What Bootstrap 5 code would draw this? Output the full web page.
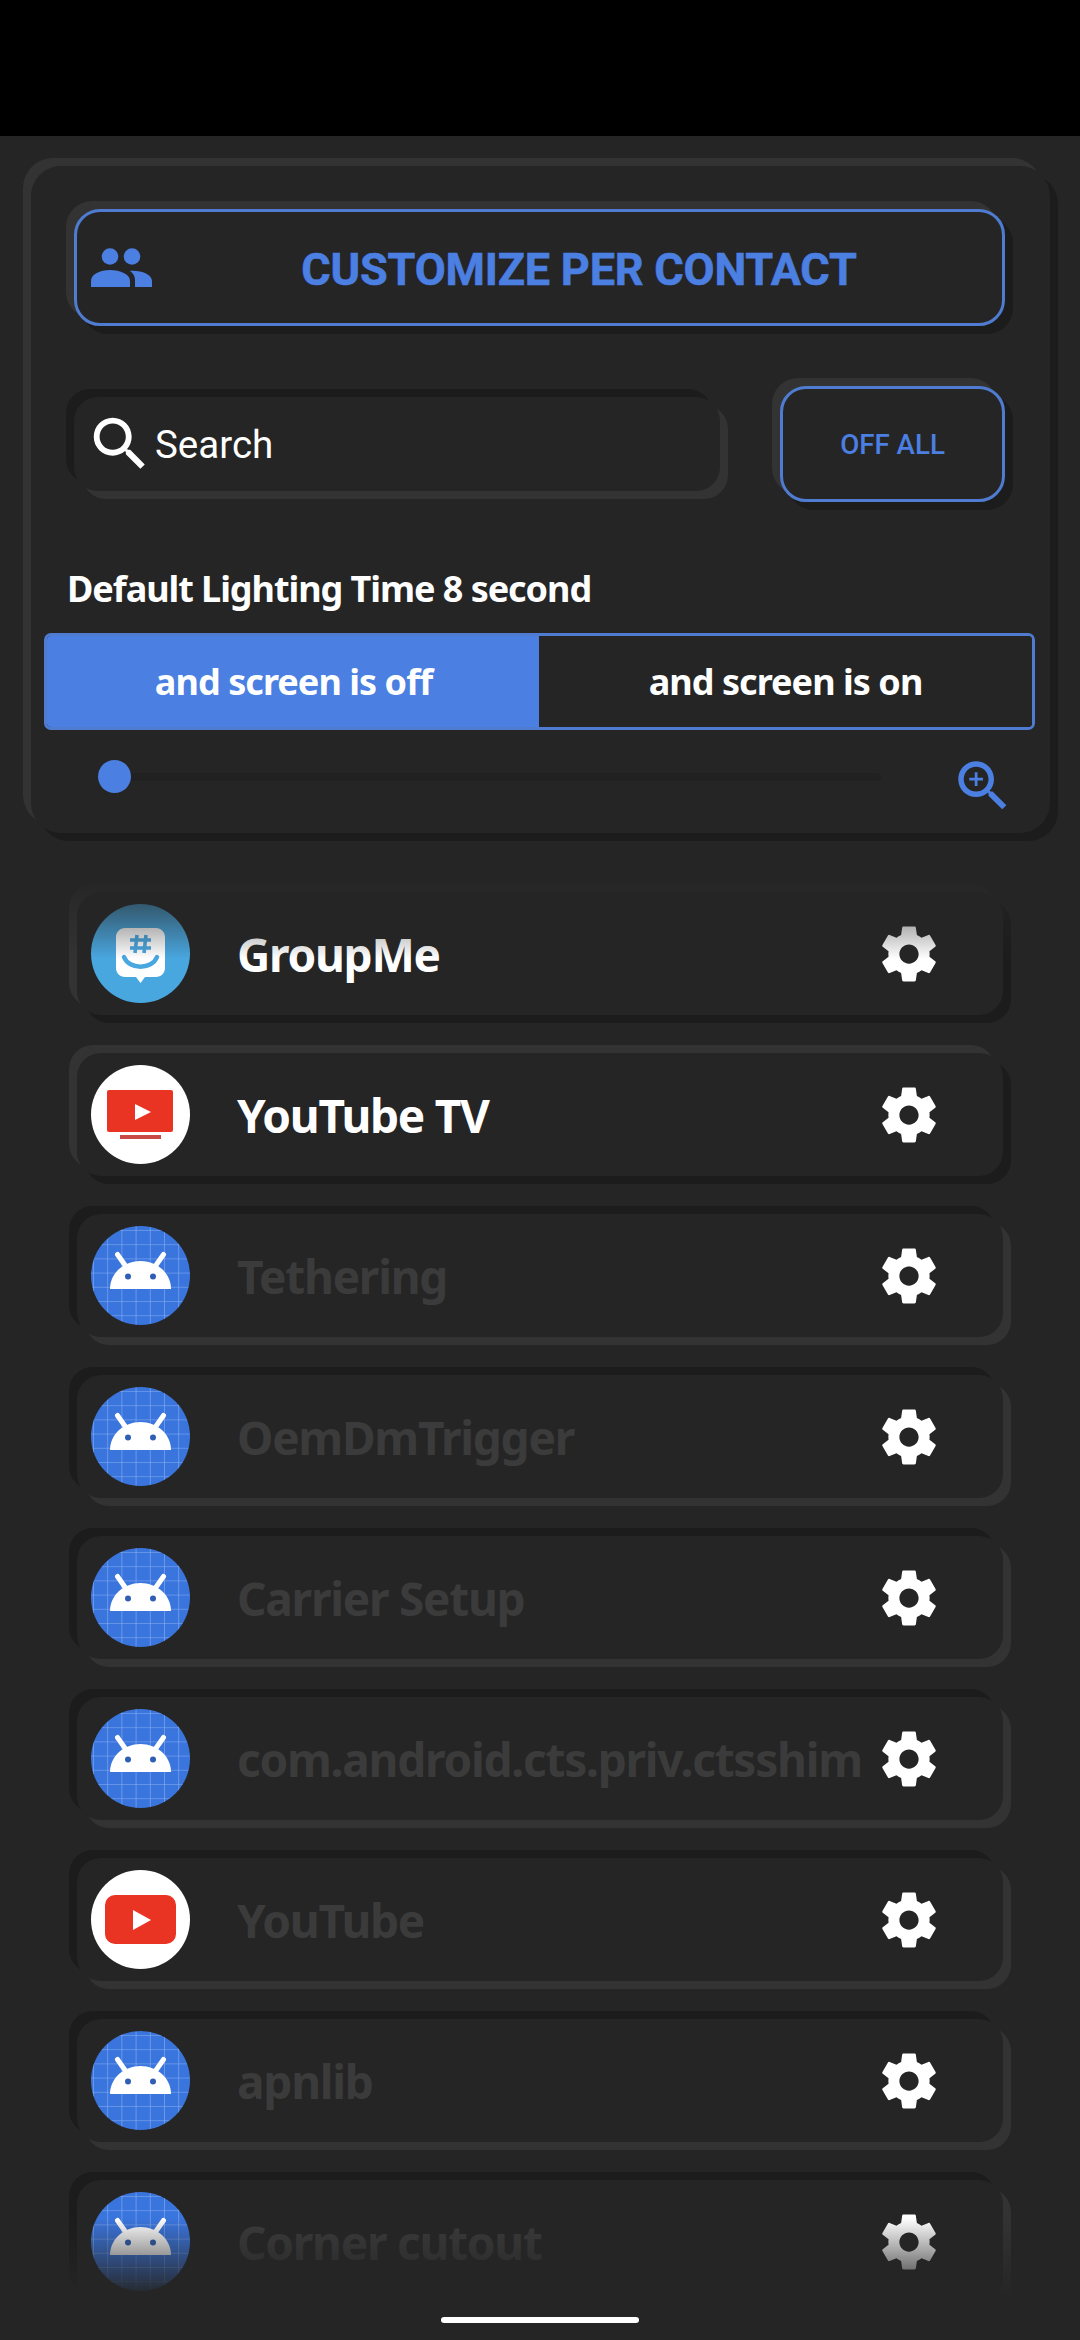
<!DOCTYPE html>
<html lang="en"><head><meta charset="utf-8"><title>Lighting</title>
<link href="https://cdn.jsdelivr.net/npm/bootstrap@5.3.0/dist/css/bootstrap.min.css" rel="stylesheet">
<style>
:root{--pg:#252525;--hi:#333333;--lo:#1c1c1c;--blue:#4b7fe2;--edge:#4f7cd0}
html,body{height:2340px;overflow:hidden;background:var(--pg)}
body{font-family:"Noto Sans",sans-serif;color:#fff}
.statusband{height:136px;background:#000}
.raised{box-shadow:-8px -8px 0 var(--hi),8px 8px 0 var(--lo)}
.pressed{box-shadow:-8px -8px 0 var(--lo),8px 8px 0 var(--hi)}
.panel-box{margin:30px 30px 0 31px;height:667px;border-radius:30px;background:var(--pg)}
.btn.cust-btn{margin:43px 45px 0 43px;height:117px;width:931px;border:3px solid var(--edge);border-radius:26px;background:var(--pg);color:var(--blue);font:700 45px Roboto,sans-serif;padding:3px 0 0 79px;position:relative;text-transform:uppercase;letter-spacing:-.2px;-webkit-text-stroke:.6px var(--blue)}
.people{position:absolute;left:14px;top:36px}
.search-line{margin:60px 45px 0 43px;height:116px}
.search-wrap{width:646px;height:94px;border-radius:24px;background:var(--pg);padding-left:11px}
.search-field.form-control{background:transparent;border:0;box-shadow:none;color:#fff;font:400 38.5px Roboto,sans-serif;padding:0;height:94px}
.search-field::placeholder{color:#fff;opacity:1}
.btn.off-btn{width:225px;height:116px;border:3px solid var(--edge);border-radius:26px;background:var(--pg);color:var(--blue);font:500 27.7px Roboto,sans-serif;padding:0}
.time-label{margin:64px 0 0 36px;height:46px;font-size:36px;font-weight:700;line-height:46px;letter-spacing:-1.05px}
.mode-group{margin:21px 15px 0 13px;height:97px;width:991px;border:3px solid var(--edge);border-radius:7px;overflow:hidden}
.btn.mode-btn{flex:1 1 50%;border:0;border-radius:0;font-size:36px;font-weight:700;color:#fff;padding:0;letter-spacing:-.95px;background:var(--pg)}
.btn.mode-btn.on{background:var(--blue)}
.slider-line{margin:30px 46px 0 67px;height:49px;position:relative}
.track-range.form-range{width:783px;height:33px;margin-top:0;padding:0;display:block}
.track-range::-webkit-slider-runnable-track{height:8px;background:#212121;border-radius:4px}
.track-range::-webkit-slider-thumb{width:33px;height:33px;margin-top:-12.5px;background:var(--blue);border-radius:50%;border:0}
.zoom-ico{position:absolute;top:-7px;right:-12px}
.app-list{height:1424px;margin-top:46px;padding:13px 77px 0 77px;overflow:hidden;position:relative;width:1080px}
.app-row{height:123px;margin-bottom:38px;border-radius:24px;background:var(--pg);padding:0 61px 0 14px}
.app-ico{width:99px;height:99px;flex:none;display:block}
.app-name{margin-left:47px;font-size:46px;font-weight:700;letter-spacing:-1.25px;white-space:nowrap;line-height:1;flex:1 1 auto}
.dim{color:#3b3b3b}
.gear{width:66px;height:66px;flex:none;display:block;fill:#fff}
.fade-top,.fade-btm{position:absolute;left:0;right:0;pointer-events:none}
.fade-top{top:0;height:80px;background:linear-gradient(to bottom,#252525 0,rgba(37,37,37,.62) 30%,rgba(37,37,37,0) 100%)}
.fade-btm{bottom:0;height:85px;background:linear-gradient(to bottom,rgba(37,37,37,0) 0,rgba(37,37,37,.97) 90%,#252525 100%)}
.home-pill{position:absolute;left:441px;top:2317px;width:198px;height:6px;border-radius:3px;background:#fff}
</style></head>
<body>
<svg width="0" height="0" class="position-absolute">
<defs>
<pattern id="gridp" x="2" y="4" width="14.2" height="14.2" patternUnits="userSpaceOnUse"><path d="M0 0H14.2M0 0V14.2" stroke="#a9c6f7" stroke-width="1.1" fill="none" opacity=".75"/></pattern>
<symbol id="droid" viewBox="0 0 99 99">
<circle cx="49.5" cy="49.5" r="49.5" fill="#3a75de"/><circle cx="49.5" cy="49.5" r="49.5" fill="url(#gridp)"/>
<path d="M26.500 28.500L36 42M72.500 28.500L63 42" stroke="#fff" stroke-width="5" stroke-linecap="round"/>
<path d="M19 63C19 47 33 35 49.5 35S80 47 80 63Z" fill="#fff"/>
<circle cx="37" cy="50.500" r="3" fill="#2f5fb5"/><circle cx="62" cy="50.500" r="3" fill="#2f5fb5"/>
</symbol>
<symbol id="cog" viewBox="0 0 24 24"><path d="M19.43 12.98c.04-.32.07-.64.07-.98s-.03-.66-.07-.98l2.11-1.65c.19-.15.24-.42.12-.64l-2-3.46c-.12-.22-.39-.3-.61-.22l-2.49 1c-.52-.4-1.08-.73-1.69-.98l-.38-2.65C14.46 2.18 14.25 2 14 2h-4c-.25 0-.46.18-.49.42l-.38 2.65c-.61.25-1.17.59-1.69.98l-2.49-1c-.23-.09-.49 0-.61.22l-2 3.46c-.13.22-.07.49.12.64l2.11 1.65c-.04.32-.07.65-.07.98s.03.66.07.98l-2.11 1.65c-.19.15-.24.42-.12.64l2 3.46c.12.22.39.3.61.22l2.49-1c.52.4 1.08.73 1.69.98l.38 2.65c.03.24.24.42.49.42h4c.25 0 .46-.18.49-.42l.38-2.65c.61-.25 1.17-.59 1.69-.98l2.49 1c.23.09.49 0 .61-.22l2-3.46c.12-.22.07-.49-.12-.64l-2.11-1.65zM12 15.500c-1.93 0-3.5-1.57-3.5-3.5s1.57-3.5 3.5-3.5 3.5 1.57 3.5 3.5-1.57 3.5-3.5 3.5z"/></symbol>
</defs></svg>
<div class="statusband"></div>
<section class="panel-box raised d-flex flex-column">
  <button class="btn cust-btn raised" type="button">
    <svg class="people" width="61" height="39" viewBox="0 0 61 39" fill="#4b7fe2"><circle cx="19" cy="8.500" r="8.300"/><circle cx="41" cy="8.500" r="8.300"/><path d="M0 39V33C0 26 9 22 19 22S39 26 39 33V39Z"/><path d="M39 23C49 22 61 26 61 33V39H44V32C44 28 42 25 39 23Z"/></svg>
    Customize per contact
  </button>
  <div class="search-line d-flex justify-content-between align-items-center">
    <div class="search-wrap pressed d-flex align-items-center">
      <svg width="70" height="70" viewBox="0 0 24 24" fill="#fff" class="flex-shrink-0"><path d="M15.5 14h-.79l-.28-.27C15.41 12.59 16 11.11 16 9.5 16 5.910 13.090 3 9.500 3S3 5.910 3 9.500 5.910 16 9.500 16c1.610 0 3.090-.59 4.230-1.570l.27.28v.79l5 4.990L20.490 19l-4.990-5zm-6 0C7.010 14 5 11.990 5 9.500S7.010 5 9.500 5 14 7.010 14 9.500 11.990 14 9.500 14z"/></svg>
      <input class="form-control search-field" type="text" placeholder="Search">
    </div>
    <button class="btn off-btn raised" type="button">OFF ALL</button>
  </div>
  <div class="time-label">Default Lighting Time 8 second</div>
  <div class="btn-group mode-group" role="group">
    <button class="btn mode-btn on" type="button">and screen is off</button>
    <button class="btn mode-btn" type="button">and screen is on</button>
  </div>
  <div class="slider-line d-flex justify-content-between">
    <input class="form-range track-range" type="range" min="0" max="100" value="0">
    <svg width="66" height="66" viewBox="0 0 24 24" fill="#4b7fe2" class="zoom-ico"><path d="M15.5 14h-.79l-.28-.27C15.41 12.590 16 11.110 16 9.500 16 5.910 13.090 3 9.500 3S3 5.910 3 9.500 5.910 16 9.500 16c1.610 0 3.090-.59 4.230-1.570l.27.28v.79l5 4.990L20.490 19l-4.990-5zm-6 0C7.010 14 5 11.990 5 9.500S7.010 5 9.500 5 14 7.010 14 9.500 11.990 14 9.500 14zm2.500-4h-2v2H9v-2H7V9h2V7h1v2h2v1z"/></svg>
  </div>
</section>
<main class="app-list">
  <div class="app-row raised d-flex align-items-center">
    <svg class="app-ico" viewBox="0 0 99 99"><circle cx="49.5" cy="49.5" r="49.5" fill="#49a7e0"/><path d="M34 24H65C70 24 74 28 74 33V64C74 69 70 73 65 73H54L49.500 79L45 73H34C29 73 25 69 25 64V33C25 28 29 24 34 24Z" fill="#fff"/><path d="M33 53C38 66 61 66 66 53" fill="none" stroke="#49a7e0" stroke-width="4.500" stroke-linecap="round"/><path d="M46 31L44 49M55 31L53 49M39 36H60M39 44H60" stroke="#49a7e0" stroke-width="3.600" fill="none"/></svg>
    <div class="app-name">GroupMe</div><svg class="gear"><use href="#cog"/></svg>
  </div>
  <div class="app-row raised d-flex align-items-center">
    <svg class="app-ico" viewBox="0 0 99 99"><circle cx="49.5" cy="49.5" r="49.5" fill="#fff"/><rect x="16" y="25" width="66" height="42" rx="2" fill="#e93323"/><rect x="29" y="70" width="41" height="4" fill="#c94a45"/><path d="M44 39L60 47L44 55Z" fill="#fff"/></svg>
    <div class="app-name">YouTube TV</div><svg class="gear"><use href="#cog"/></svg>
  </div>
  <div class="app-row pressed d-flex align-items-center"><svg class="app-ico"><use href="#droid"/></svg><div class="app-name dim">Tethering</div><svg class="gear"><use href="#cog"/></svg></div>
  <div class="app-row pressed d-flex align-items-center"><svg class="app-ico"><use href="#droid"/></svg><div class="app-name dim">OemDmTrigger</div><svg class="gear"><use href="#cog"/></svg></div>
  <div class="app-row pressed d-flex align-items-center"><svg class="app-ico"><use href="#droid"/></svg><div class="app-name dim">Carrier Setup</div><svg class="gear"><use href="#cog"/></svg></div>
  <div class="app-row pressed d-flex align-items-center"><svg class="app-ico"><use href="#droid"/></svg><div class="app-name dim">com.android.cts.priv.ctsshim</div><svg class="gear"><use href="#cog"/></svg></div>
  <div class="app-row pressed d-flex align-items-center">
    <svg class="app-ico" viewBox="0 0 99 99"><circle cx="49.5" cy="49.5" r="49.5" fill="#fff"/><rect x="14" y="25" width="71" height="49" rx="10" fill="#e93323"/><path d="M42 40L60 50L42 60Z" fill="#fff"/></svg>
    <div class="app-name dim">YouTube</div><svg class="gear"><use href="#cog"/></svg>
  </div>
  <div class="app-row pressed d-flex align-items-center"><svg class="app-ico"><use href="#droid"/></svg><div class="app-name dim">apnlib</div><svg class="gear"><use href="#cog"/></svg></div>
  <div class="app-row pressed d-flex align-items-center"><svg class="app-ico"><use href="#droid"/></svg><div class="app-name dim">Corner cutout</div><svg class="gear"><use href="#cog"/></svg></div>
  <div class="fade-top"></div><div class="fade-btm"></div>
</main>
<div class="home-pill"></div>
</body></html>
